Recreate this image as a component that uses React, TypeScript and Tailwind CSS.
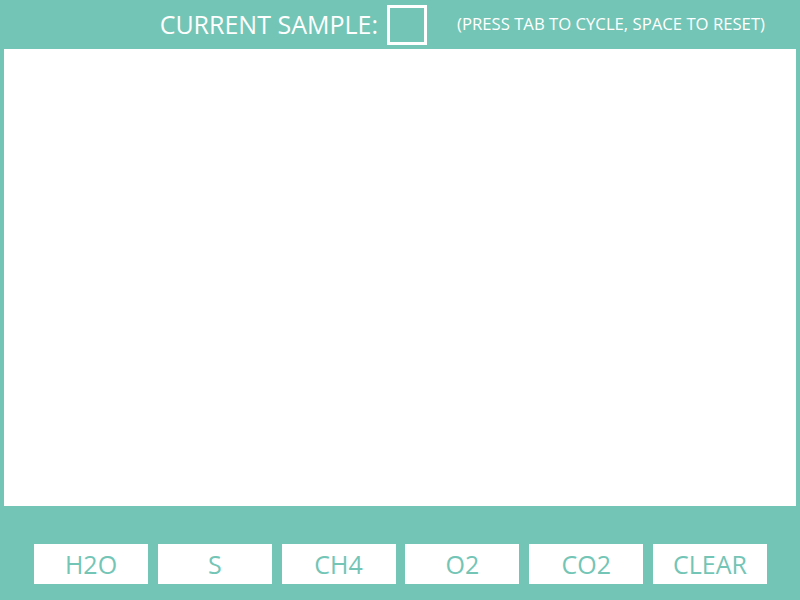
import React from 'react';

const samples = ['H2O', 'S', 'CH4', 'O2', 'CO2', 'CLEAR'];

export default function App() {
  return (
    <div className="w-[800px] h-[600px] bg-[#73c5b6] flex flex-col font-['Open_Sans',sans-serif] text-white overflow-hidden">
      <div className="h-[49px] flex items-center justify-end pr-[35px]">
        <span className="text-[25px] leading-none mr-[9px]">CURRENT SAMPLE:</span>
        <div className="w-[40px] h-[40px] border-[3px] border-white mr-[30px]" />
        <span className="text-[16.7px] leading-none">(PRESS TAB TO CYCLE, SPACE TO RESET)</span>
      </div>
      <div className="mx-[4px] h-[457px] bg-white" />
      <div className="flex justify-center gap-[9.8px] pt-[38px] pl-[1px]">
        {samples.map((s) => (
          <button
            key={s}
            className="w-[114px] h-[40px] bg-white text-[#73c5b6] text-[25px] leading-none flex items-center justify-center"
          >
            {s}
          </button>
        ))}
      </div>
    </div>
  );
}
